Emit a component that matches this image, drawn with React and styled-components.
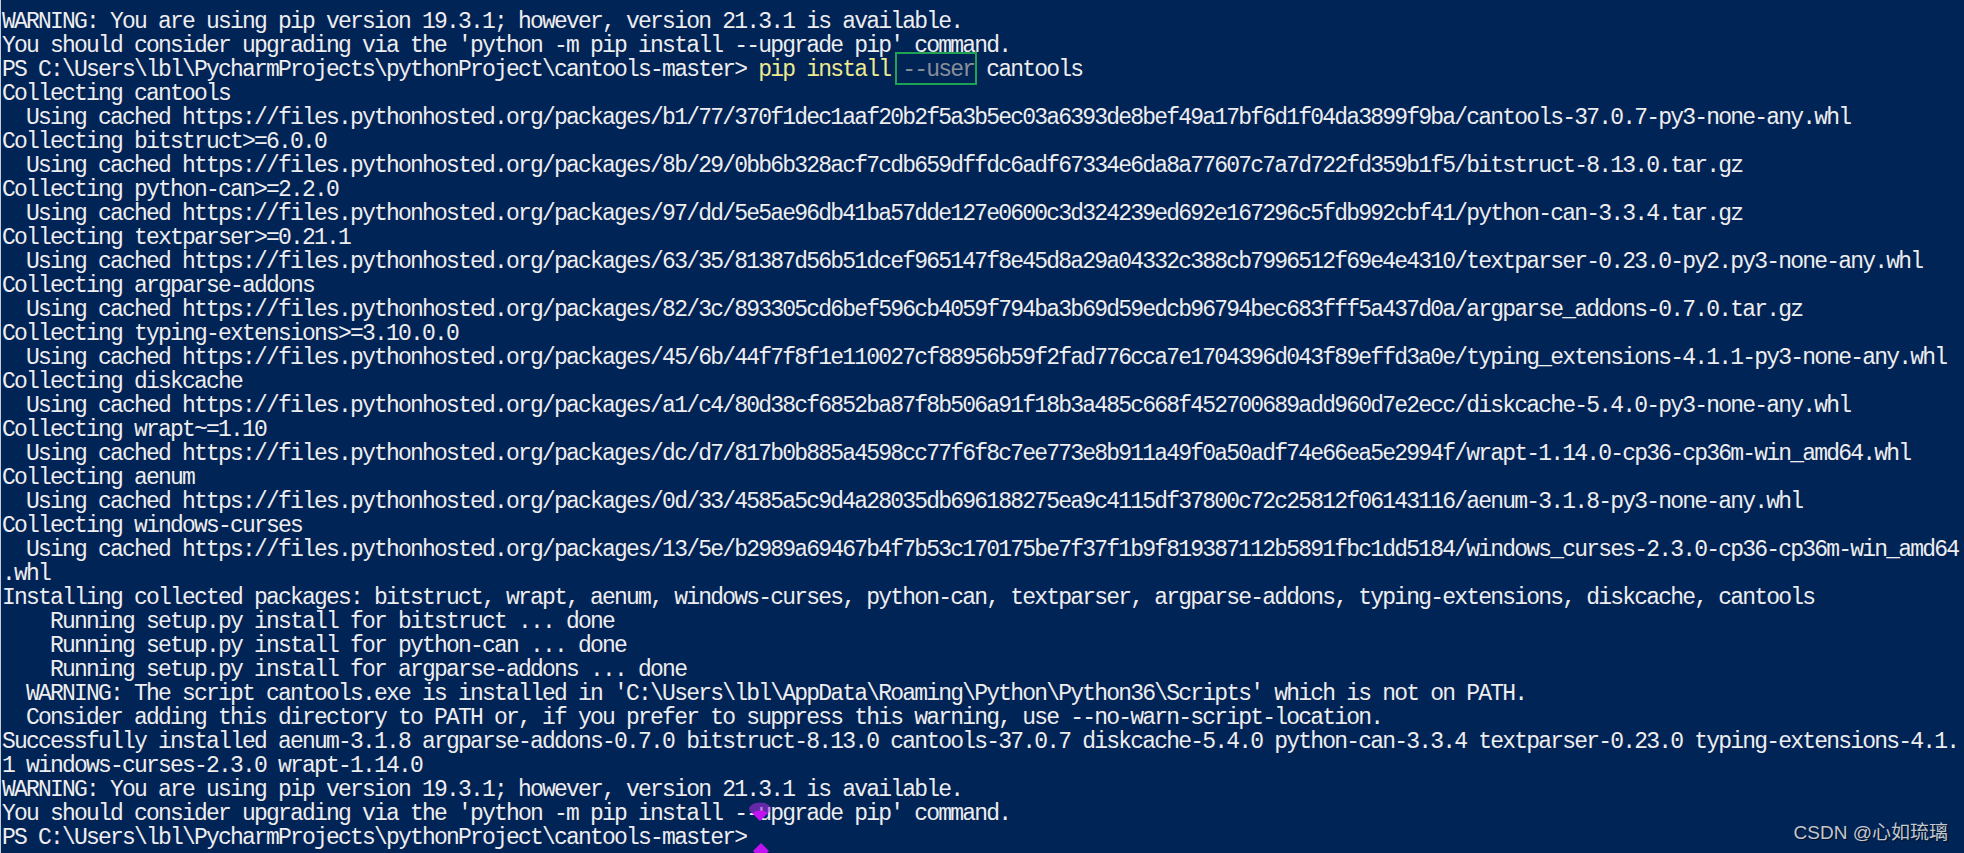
import React from "react";
import styled, { createGlobalStyle } from "styled-components";

const Global = createGlobalStyle`
  html, body { margin: 0; padding: 0; background: #012456; overflow: hidden; }
  #root { min-height: 100vh; }
`;

const Console = styled.div`
  position: relative;
  box-sizing: border-box;
  display: flex;
  flex-direction: column;
  height: 853px;
  background: #012456;
  border-left: 1px solid #c9ccd6;
  padding: 10px 0 0 1px;
  color: #eeedf0;
  font-family: "Liberation Mono", "DejaVu Sans Mono", monospace;
  font-size: 23px;
  letter-spacing: -1.8px;
  overflow: hidden;
`;

const Line = styled.div`
  white-space: pre;
  height: 24px;
  line-height: 24px;
  flex: none;
`;

const Cmd = styled.span`
  color: #efe98f;
`;

const Param = styled.span`
  color: #8a8f9a;
  position: relative;
  &::after {
    content: "";
    position: absolute;
    left: -7px;
    right: -3px;
    top: -5px;
    bottom: -2px;
    border: 2px solid #1fa352;
  }
`;

const Marked = styled.span`
  position: relative;
`;

const Pin = styled.svg`
  position: absolute;
  left: 14px;
  top: 1px;
  width: 24px;
  height: 20px;
  pointer-events: none;
`;

const Diamond = styled.svg`
  position: absolute;
  left: 19px;
  top: 42px;
  width: 16px;
  height: 16px;
  pointer-events: none;
`;

const Watermark = styled.div`
  position: absolute;
  right: 16px;
  bottom: 9px;
  font-family: "Liberation Sans", "Noto Sans CJK SC", sans-serif;
  font-size: 19px;
  letter-spacing: 0;
  color: #c3c7cf;
  text-shadow: 1px 1px 1px rgba(0, 0, 0, 0.55);
`;

const P = "https://files.pythonhosted.org/packages/";

const lines = [
  "WARNING: You are using pip version 19.3.1; however, version 21.3.1 is available.",
  "You should consider upgrading via the 'python -m pip install --upgrade pip' command.",
  "__PROMPT_CMD__",
  "Collecting cantools",
  `  Using cached ${P}b1/77/370f1dec1aaf20b2f5a3b5ec03a6393de8bef49a17bf6d1f04da3899f9ba/cantools-37.0.7-py3-none-any.whl`,
  "Collecting bitstruct>=6.0.0",
  `  Using cached ${P}8b/29/0bb6b328acf7cdb659dffdc6adf67334e6da8a77607c7a7d722fd359b1f5/bitstruct-8.13.0.tar.gz`,
  "Collecting python-can>=2.2.0",
  `  Using cached ${P}97/dd/5e5ae96db41ba57dde127e0600c3d324239ed692e167296c5fdb992cbf41/python-can-3.3.4.tar.gz`,
  "Collecting textparser>=0.21.1",
  `  Using cached ${P}63/35/81387d56b51dcef965147f8e45d8a29a04332c388cb7996512f69e4e4310/textparser-0.23.0-py2.py3-none-any.whl`,
  "Collecting argparse-addons",
  `  Using cached ${P}82/3c/893305cd6bef596cb4059f794ba3b69d59edcb96794bec683fff5a437d0a/argparse_addons-0.7.0.tar.gz`,
  "Collecting typing-extensions>=3.10.0.0",
  `  Using cached ${P}45/6b/44f7f8f1e110027cf88956b59f2fad776cca7e1704396d043f89effd3a0e/typing_extensions-4.1.1-py3-none-any.whl`,
  "Collecting diskcache",
  `  Using cached ${P}a1/c4/80d38cf6852ba87f8b506a91f18b3a485c668f452700689add960d7e2ecc/diskcache-5.4.0-py3-none-any.whl`,
  "Collecting wrapt~=1.10",
  `  Using cached ${P}dc/d7/817b0b885a4598cc77f6f8c7ee773e8b911a49f0a50adf74e66ea5e2994f/wrapt-1.14.0-cp36-cp36m-win_amd64.whl`,
  "Collecting aenum",
  `  Using cached ${P}0d/33/4585a5c9d4a28035db696188275ea9c4115df37800c72c25812f06143116/aenum-3.1.8-py3-none-any.whl`,
  "Collecting windows-curses",
  `  Using cached ${P}13/5e/b2989a69467b4f7b53c170175be7f37f1b9f819387112b5891fbc1dd5184/windows_curses-2.3.0-cp36-cp36m-win_amd64`,
  ".whl",
  "Installing collected packages: bitstruct, wrapt, aenum, windows-curses, python-can, textparser, argparse-addons, typing-extensions, diskcache, cantools",
  "    Running setup.py install for bitstruct ... done",
  "    Running setup.py install for python-can ... done",
  "    Running setup.py install for argparse-addons ... done",
  "  WARNING: The script cantools.exe is installed in 'C:\\Users\\lbl\\AppData\\Roaming\\Python\\Python36\\Scripts' which is not on PATH.",
  "  Consider adding this directory to PATH or, if you prefer to suppress this warning, use --no-warn-script-location.",
  "Successfully installed aenum-3.1.8 argparse-addons-0.7.0 bitstruct-8.13.0 cantools-37.0.7 diskcache-5.4.0 python-can-3.3.4 textparser-0.23.0 typing-extensions-4.1.",
  "1 windows-curses-2.3.0 wrapt-1.14.0",
  "WARNING: You are using pip version 19.3.1; however, version 21.3.1 is available.",
  "__MARKED__",
  "PS C:\\Users\\lbl\\PycharmProjects\\pythonProject\\cantools-master>",
];

const PROMPT = "PS C:\\Users\\lbl\\PycharmProjects\\pythonProject\\cantools-master> ";

function renderLine(text, i) {
  if (text === "__PROMPT_CMD__") {
    return (
      <Line key={i}>
        {PROMPT}
        <Cmd>pip install</Cmd> <Param>--user</Param> cantools
      </Line>
    );
  }
  if (text === "__MARKED__") {
    return (
      <Line key={i}>
        {"You should consider upgrading via the 'python -m pip install "}
        <Marked>
          --
          <Pin viewBox="0 0 24 20">
            <ellipse cx="12" cy="7" rx="11" ry="6.5" fill="#b62ee8" fillOpacity="0.55" />
            <path d="M4 11 L12 19 L20 11 Q12 6 4 11 Z" fill="#c312f0" />
          </Pin>
          <Diamond viewBox="0 0 16 16">
            <path d="M8 0 L16 8 L8 16 L0 8 Z" fill="#c312f0" />
          </Diamond>
        </Marked>
        {"upgrade pip' command."}
      </Line>
    );
  }
  return <Line key={i}>{text}</Line>;
}

export default function App() {
  return (
    <>
      <Global />
      <Console>
        {lines.map(renderLine)}
        <Watermark>CSDN @心如琉璃</Watermark>
      </Console>
    </>
  );
}
